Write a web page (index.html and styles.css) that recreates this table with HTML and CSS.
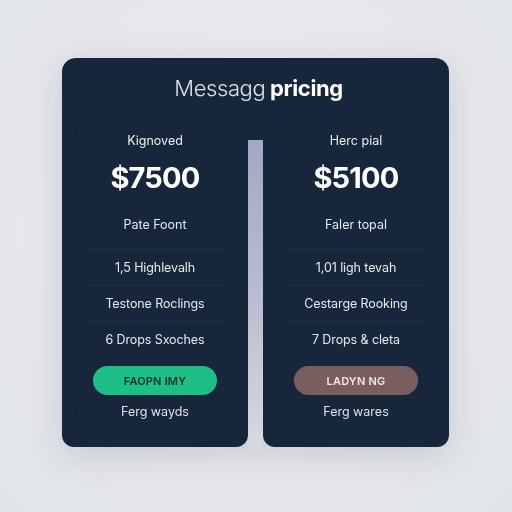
FILE: index.html
```html
<!DOCTYPE html>
<html lang="en">
<head>
<meta charset="utf-8">
<title>Messagg pricing</title>
<link rel="stylesheet" href="styles.css">
</head>
<body>
<main class="stage">
  <section class="panel">
    <header class="header">
      <h1 class="title"><span class="title-light">Messagg</span> <span class="title-bold">pricing</span></h1>
    </header>
    <div class="cards">
      <article class="card">
        <div class="card-inner">
          <p class="plan">Kignoved</p>
          <p class="price">$7500</p>
          <p class="sub">Pate Foont</p>
          <ul class="features">
            <li>1,5 Highlevalh</li>
            <li>Testone Roclings</li>
            <li>6 Drops Sxoches</li>
          </ul>
          <button class="btn btn-green">FAOPN IMY</button>
          <p class="foot">Ferg wayds</p>
        </div>
      </article>
      <div class="gap"></div>
      <article class="card">
        <div class="card-inner">
          <p class="plan">Herc pial</p>
          <p class="price">$5100</p>
          <p class="sub">Faler topal</p>
          <ul class="features">
            <li>1,01 ligh tevah</li>
            <li>Cestarge Rooking</li>
            <li>7 Drops &amp; cleta</li>
          </ul>
          <button class="btn btn-brown">LADYN NG</button>
          <p class="foot">Ferg wares</p>
        </div>
      </article>
    </div>
  </section>
</main>
</body>
</html>
```

FILE: styles.css
```css
* { box-sizing: border-box; }

html, body {
  margin: 0;
  padding: 0;
}

body {
  width: 512px;
  height: 512px;
  background: radial-gradient(ellipse at 50% 45%, #eef0f3 0%, #e6e8ec 60%, #e1e4e9 100%);
  font-family: "Inter", "Liberation Sans", sans-serif;
  overflow: hidden;
}

.stage {
  padding: 58px 0 0 62px;
}

.panel {
  width: 387px;
  display: flex;
  flex-direction: column;
  filter: drop-shadow(0 8px 18px rgba(30, 40, 60, 0.16));
}

.header {
  height: 62px;
  background: #17263a;
  border-radius: 14px 14px 0 0;
  display: flex;
  align-items: center;
  justify-content: center;
  padding: 0 0 2px 6px;
}

.title {
  margin: 0;
  font-size: 22px;
  line-height: 28px;
  letter-spacing: -0.4px;
  color: #ffffff;
}

.title-light {
  font-weight: 300;
  color: #dde1e7;
}

.title-bold {
  font-weight: 700;
}

.cards {
  display: grid;
  grid-template-columns: 186px 15px 186px;
  height: 327px;
}

.gap {
  background: linear-gradient(to bottom, #17263a 0, #17263a 20px, #a3a8c3 20px, #b9bdd0 55%, #d6d9e1 100%);
}

.card {
  background: #17263a;
  border-radius: 0 0 12px 12px;
  padding: 2px 10px 0;
}

.card-inner {
  height: 300px;
  border: 1px solid rgba(255, 255, 255, 0.018);
  border-radius: 10px;
  padding-top: 9px;
  display: flex;
  flex-direction: column;
  align-items: center;
  color: #e6e9ee;
  text-align: center;
}

.plan {
  margin: 0;
  font-size: 12.5px;
  line-height: 18px;
  color: #eceef2;
}

.price {
  margin: 10px 0 0;
  font-size: 29px;
  line-height: 36px;
  font-weight: 700;
  color: #ffffff;
  letter-spacing: -0.8px;
}

.sub {
  margin: 20px 0 0;
  font-size: 12.5px;
  line-height: 18px;
  color: #e6e9ee;
}

.features {
  list-style: none;
  margin: 15px 0 0;
  padding: 0;
  width: 142px;
}

.features li {
  height: 36px;
  line-height: 36px;
  font-size: 12.5px;
  border-top: 1px solid rgba(255, 255, 255, 0.04);
  white-space: nowrap;
  letter-spacing: -0.1px;
}

.btn {
  margin-top: 9px;
  width: 124px;
  height: 33px;
  border: none;
  border-radius: 17px;
  font-family: "Inter", "Liberation Sans", sans-serif;
  font-size: 11px;
  font-weight: 600;
  letter-spacing: 0.2px;
}

.btn-green {
  background: #1dbf87;
  color: #12302e;
}

.btn-brown {
  background: #7a5d5e;
  color: #f0e6e6;
}

.foot {
  margin: 8px 0 0;
  font-size: 12.5px;
  line-height: 18px;
  color: #dde1e7;
}
```
